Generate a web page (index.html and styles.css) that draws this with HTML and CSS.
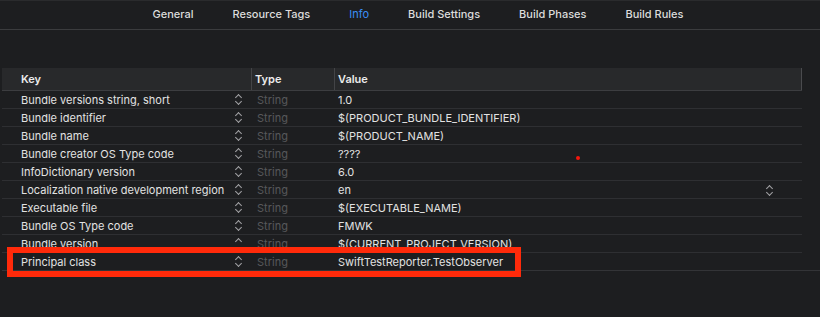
FILE: index.html
```html
<!DOCTYPE html>
<html lang="en">
<head>
    <meta charset="UTF-8">
    <title>Info</title>
    <link rel="stylesheet" href="styles.css">
</head>
<body>
    <nav class="tab-bar">
        <span class="tab">General</span>
        <span class="tab">Resource Tags</span>
        <span class="tab active">Info</span>
        <span class="tab">Build Settings</span>
        <span class="tab">Build Phases</span>
        <span class="tab">Build Rules</span>
    </nav>

    <main class="content">
        <div class="plist">
            <div class="row head">
                <div class="cell key">Key</div>
                <div class="cell type">Type</div>
                <div class="cell value">Value</div>
            </div>

            <div class="row">
                <div class="cell key">Bundle versions string, short<span class="stepper"></span></div>
                <div class="cell type">String</div>
                <div class="cell value">1.0</div>
            </div>
            <div class="row">
                <div class="cell key">Bundle identifier<span class="stepper"></span></div>
                <div class="cell type">String</div>
                <div class="cell value">$(PRODUCT_BUNDLE_IDENTIFIER)</div>
            </div>
            <div class="row">
                <div class="cell key">Bundle name<span class="stepper"></span></div>
                <div class="cell type">String</div>
                <div class="cell value">$(PRODUCT_NAME)</div>
            </div>
            <div class="row">
                <div class="cell key">Bundle creator OS Type code<span class="stepper"></span></div>
                <div class="cell type">String</div>
                <div class="cell value">????<span class="dot"></span></div>
            </div>
            <div class="row">
                <div class="cell key">InfoDictionary version<span class="stepper"></span></div>
                <div class="cell type">String</div>
                <div class="cell value">6.0</div>
            </div>
            <div class="row">
                <div class="cell key">Localization native development region<span class="stepper"></span></div>
                <div class="cell type">String</div>
                <div class="cell value">en<span class="stepper"></span></div>
            </div>
            <div class="row">
                <div class="cell key">Executable file<span class="stepper"></span></div>
                <div class="cell type">String</div>
                <div class="cell value">$(EXECUTABLE_NAME)</div>
            </div>
            <div class="row">
                <div class="cell key">Bundle OS Type code<span class="stepper"></span></div>
                <div class="cell type">String</div>
                <div class="cell value">FMWK</div>
            </div>
            <div class="row">
                <div class="cell key">Bundle version<span class="stepper up-only"></span></div>
                <div class="cell type">String</div>
                <div class="cell value">$(CURRENT_PROJECT_VERSION)</div>
            </div>
            <div class="row last">
                <div class="cell key">Principal class<span class="stepper"></span></div>
                <div class="cell type">String</div>
                <div class="cell value">SwiftTestReporter.TestObserver</div>
                <div class="highlight"></div>
            </div>
        </div>
    </main>
</body>
</html>
```

FILE: styles.css
```css
:root {
    --bg-color: #1d1e20;
    --head-bg: #28292b;
    --line-color: #2e2f32;
    --text-color: #e2e2e2;
    --muted: #57585b;
    --accent-color: #3a8ef6;
    --mark-red: #ff2a0a;
}

* {
    box-sizing: border-box;
    margin: 0;
    padding: 0;
}

body {
    font-family: 'Inter', 'Liberation Sans', sans-serif;
    font-size: 11px;
    background-color: var(--bg-color);
    color: var(--text-color);
    width: 820px;
    height: 317px;
    overflow: hidden;
}

/* top tab strip */
.tab-bar {
    height: 30px;
    display: flex;
    justify-content: center;
    align-items: center;
    gap: 39px;
    padding: 0 0 2px 16px;
    border-top: 1px solid #2a2b2d;
    border-bottom: 1px solid #3b3c3e;
    font-weight: 500;
    color: #dcdcdc;
}

.tab.active {
    color: var(--accent-color);
    font-weight: 400;
}

.content {
    padding: 38px 18px 0 2px;
}

/* property list table */
.row {
    position: relative;
    display: grid;
    grid-template-columns: 249px 83px 1fr;
    height: 18px;
    align-items: center;
    border-bottom: 1px solid var(--line-color);
}

.row.head {
    height: 23px;
    background: var(--head-bg);
    border-bottom: 1px solid #3c3d40;
    font-weight: 600;
    color: #ececec;
}

.row.head .cell {
    height: 100%;
    display: flex;
    align-items: center;
}

.row.head .type,
.row.head .value {
    border-left: 1px solid #434447;
    padding-left: 3px;
}

.row.head .value {
    border-right: 1px solid #4a4b4e;
}

.row.last {
    margin-right: -18px;
    border-bottom-color: #333437;
}

.cell {
    position: relative;
    white-space: nowrap;
    line-height: 17px;
    padding-top: 1px;
}

.key {
    padding-left: 19px;
}

.type {
    padding-left: 6px;
    color: var(--muted);
}

.row.head .type {
    color: #ececec;
}

.value {
    padding-left: 4px;
}

/* up/down chevrons */
.stepper {
    position: absolute;
    right: 9px;
    top: 2px;
    width: 7px;
    height: 13px;
}

.stepper::before,
.stepper::after {
    content: '';
    position: absolute;
    left: 1px;
    width: 4px;
    height: 4px;
    border-left: 1.2px solid #a3a3a6;
    border-top: 1.2px solid #a3a3a6;
}

.stepper::before {
    top: 2px;
    transform: rotate(45deg);
}

.stepper::after {
    top: 6px;
    transform: rotate(225deg);
}

.stepper.up-only::after {
    display: none;
}

.value .stepper {
    right: 29px;
    top: 3px;
}

.dot {
    position: absolute;
    left: 242px;
    top: 11px;
    width: 4px;
    height: 4px;
    border-radius: 50%;
    background: #f5170c;
}

/* red annotation box */
.highlight {
    position: absolute;
    left: 5px;
    top: -6px;
    width: 514px;
    height: 30px;
    border: 6px solid var(--mark-red);
    pointer-events: none;
}
```
